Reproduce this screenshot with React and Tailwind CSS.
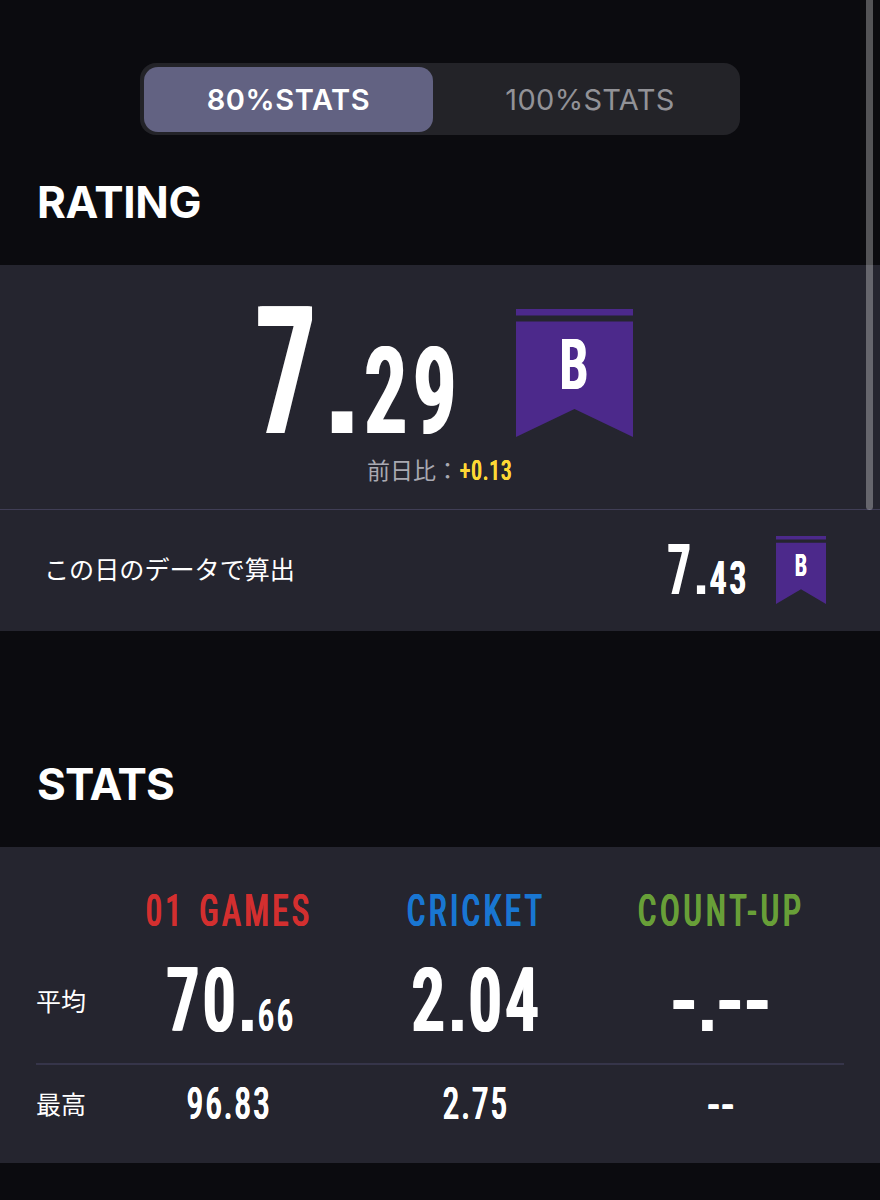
import React from 'react';
import clsx from 'clsx';

// Condensed numerals: Roboto squeezed inside a box of fixed width, stems thickened sideways
function Narrow({ box, className, children }) {
  return (
    <span className={clsx("inline-block shrink-0 whitespace-nowrap leading-[0.8] font-['Roboto',sans-serif]", box)}>
      <span className={clsx('inline-block origin-left [text-shadow:0.018em_0,-0.018em_0]', className)}>{children}</span>
    </span>
  );
}

// Square decimal point
function Point({ className }) {
  return (
    <span className={clsx("inline-block shrink-0 whitespace-nowrap leading-[0.8] font-bold font-['Liberation_Sans',sans-serif]", className)}>.</span>
  );
}

function Flag({ className, children }) {
  return (
    <div className={clsx('relative', className)}>
      <svg className="block w-full h-full" viewBox="0 0 117 128" preserveAspectRatio="none" fill="#4c298b">
        <path d="M0 0H117V6.5H0Z" />
        <path d="M0 12.5H117V128L58.5 100L0 128Z" />
      </svg>
      {children}
    </div>
  );
}

function SectionTitle({ className, children }) {
  return (
    <h2 className={clsx('pl-[37px] text-[44px] leading-[54px] font-bold text-white', className)}>
      {children}
    </h2>
  );
}

export default function App() {
  return (
    <div className="relative w-[880px] h-[1200px] overflow-hidden bg-[#0b0b0f] text-white font-['Inter','Noto_Sans_CJK_JP',sans-serif]">
      {/* Tabs */}
      <div className="pt-[63px]">
        <div className="mx-auto flex w-[600px] h-[72px] p-1 rounded-[16px] bg-[#232328] text-[29px]">
          <button className="w-[289px] h-[65px] rounded-[14px] bg-[#626282] font-semibold tracking-[0.6px]">80%STATS</button>
          <button className="flex-1 h-[65px] pl-[11px] text-[#929297] tracking-[0.3px]">100%STATS</button>
        </div>
      </div>

      {/* Rating */}
      <SectionTitle className="mt-10 tracking-[-0.3px]">RATING</SectionTitle>
      <section className="mt-[36px] h-[366px] bg-[#25252f]">
        <div className="h-[245px] border-b border-[#403e56]">
          <div className="flex h-[173px] pl-[257px]">
            <div className="flex w-[259px] items-baseline pt-[36px]">
              <Narrow box="w-[65px] text-[179px] font-bold" className="scale-x-[0.56]">7</Narrow>
              <Point className="w-[43px] text-[145px]" />
              <Narrow box="w-[100px] text-[120px] font-bold" className="scale-x-[0.6] tracking-[13px]">29</Narrow>
            </div>
            <Flag className="mt-11 w-[117px] h-[128px]">
              <Narrow box="absolute left-[44px] top-[28px] text-[70px] font-bold" className="scale-x-[0.62]">B</Narrow>
            </Flag>
          </div>
          <div className="flex items-center pl-[367px] mt-[16px]">
            <span className="w-[93px] text-[23px] leading-[34px] text-[#a9a9b2]">前日比：</span>
            <Narrow box="text-[28px] leading-[22px] font-medium text-[#fdd835]" className="scale-x-[0.65] tracking-[2px]">+0.13</Narrow>
          </div>
        </div>
        <div className="flex h-[120px] pl-11">
          <p className="w-[624px] pt-[42px] text-[25.1px] leading-[36px]">この日のデータで算出</p>
          <div className="flex w-[108px] items-baseline pt-[33px]">
            <Narrow box="w-[25px] text-[69.5px] font-bold" className="scale-x-[0.56]">7</Narrow>
            <Point className="w-[17px] text-[58px]" />
            <Narrow box="w-[50px] text-[47px] font-bold" className="scale-x-[0.6] tracking-[6px]">43</Narrow>
          </div>
          <Flag className="mt-[26px] w-[50px] h-[68px]">
            <Narrow box="absolute left-[19px] top-[18px] text-[31px] font-bold" className="scale-x-[0.6]">B</Narrow>
          </Flag>
        </div>
      </section>

      {/* Stats */}
      <SectionTitle className="mt-[126px] tracking-[-0.9px]">STATS</SectionTitle>
      <section className="mt-[36px] h-[316px] px-9 bg-[#25252f]">
        <div className="flex h-[97px] pt-[46px] pl-[110px] text-[45px] font-medium">
          <Narrow box="w-[261px] text-[#d32f2f]" className="scale-x-[0.62] tracking-[6px] [word-spacing:6px]">01 GAMES</Narrow>
          <Narrow box="w-[231px] text-[#1976d2]" className="scale-x-[0.62] tracking-[6px]">CRICKET</Narrow>
          <Narrow box="text-[#689f38]" className="scale-x-[0.62] tracking-[6.6px]">COUNT-UP</Narrow>
        </div>
        <div className="flex h-[121px] border-b-2 border-[#36354a] font-bold">
          <span className="w-[131px] pt-[39px] text-[25px] leading-[38px] font-normal">平均</span>
          <div className="flex items-baseline pt-[21px]">
            <span className="flex w-[245px] items-baseline">
              <Narrow box="w-[70px] text-[89.5px]" className="scale-x-[0.62] tracking-[7px]">70</Narrow>
              <Point className="w-[21px] text-[75px]" />
              <Narrow box="text-[45px] font-medium" className="scale-x-[0.62] tracking-[5px]">66</Narrow>
            </span>
            <span className="flex w-[259px] items-baseline">
              <Narrow box="w-[35px] text-[89.5px]" className="scale-x-[0.63]">2</Narrow>
              <Point className="w-[22px] text-[75px]" />
              <Narrow box="text-[89.5px]" className="scale-x-[0.63] tracking-[7px]">04</Narrow>
            </span>
            <span className="flex items-baseline">
              <Narrow box="relative top-[-2px] w-[26px] text-[80px]" className="scale-x-[0.82]">-</Narrow>
              <Point className="w-[20px] text-[75px]" />
              <Narrow box="relative top-[-2px] text-[80px]" className="scale-x-[0.82] tracking-[2px]">--</Narrow>
            </span>
          </div>
        </div>
        <div className="flex text-[45px] font-medium">
          <span className="w-[151px] pt-[21px] text-[25px] leading-[38px] font-normal">最高</span>
          <div className="flex items-baseline pt-[21px]">
            <Narrow box="w-[256px]" className="scale-x-[0.62] tracking-[4.5px]">96.83</Narrow>
            <Narrow box="w-[264px]" className="scale-x-[0.62] tracking-[4.5px]">2.75</Narrow>
            <Narrow box="text-[40px] font-bold" className="scale-x-[0.84] tracking-[1px]">--</Narrow>
          </div>
        </div>
      </section>

      {/* Scroll indicator */}
      <div className="absolute top-[-10px] left-[866px] w-[7px] h-[520px] rounded-full bg-white/30" />
    </div>
  );
}
